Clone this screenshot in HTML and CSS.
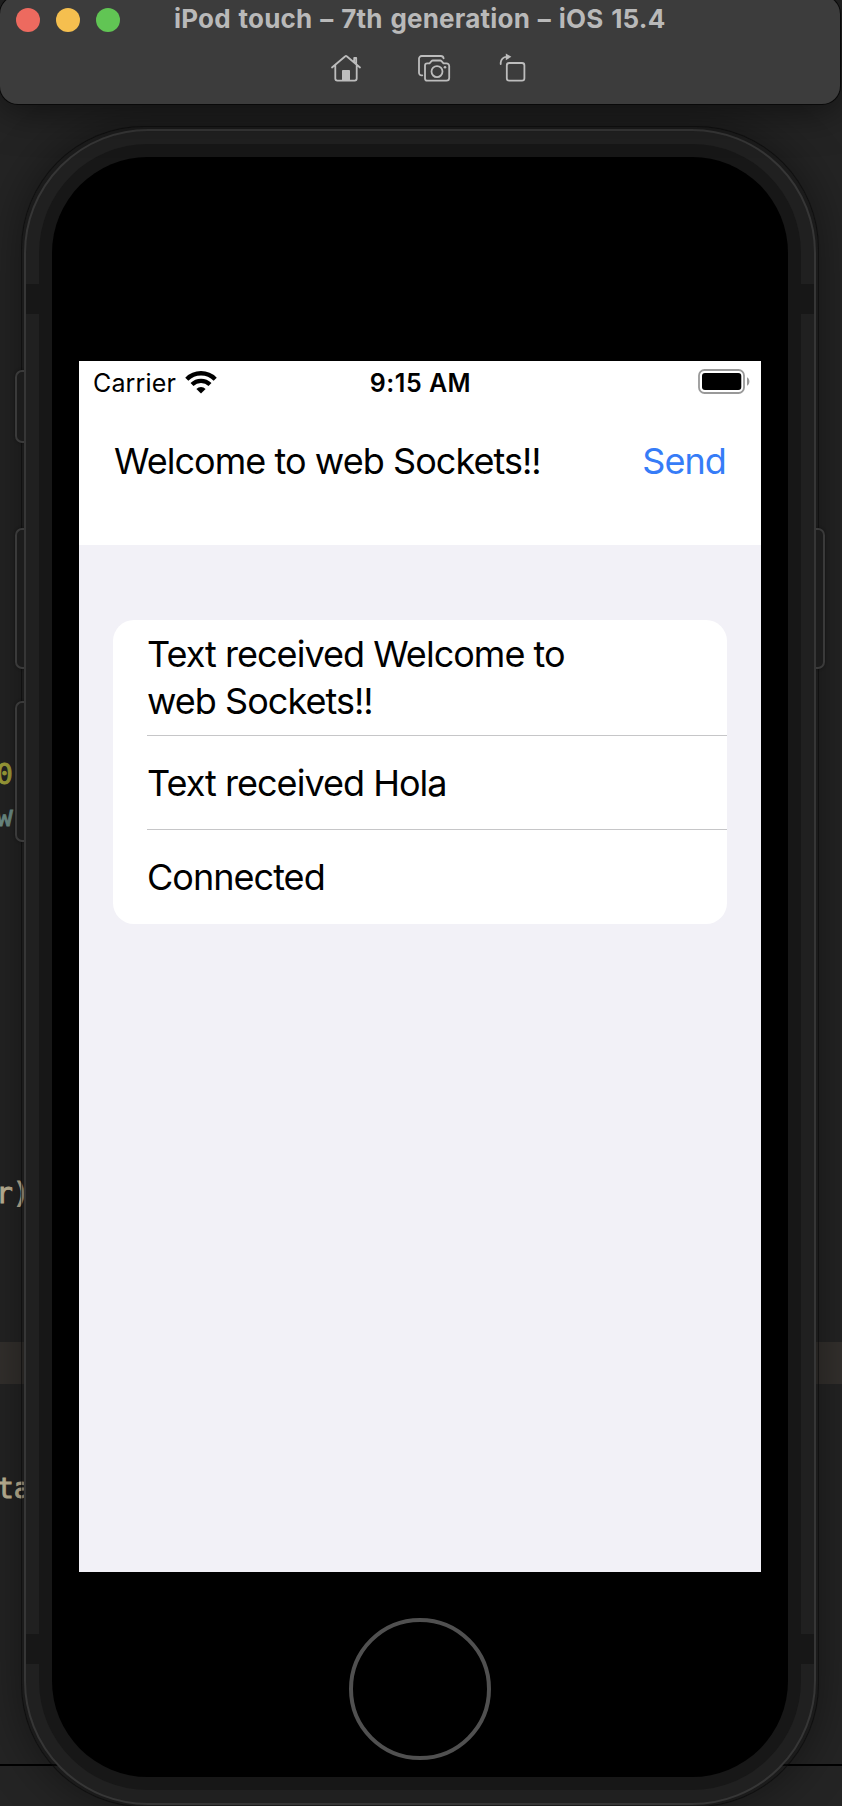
FILE: index.html
```html
<!DOCTYPE html>
<html lang="en">
<head>
<meta charset="utf-8">
<title>Simulator</title>
<link rel="stylesheet" href="styles.css">
</head>
<body>
<div class="desktop">
  <div class="code-band"></div>
  <div class="panel-divider"></div>
  <span class="code code-number">0</span>
  <span class="code code-type">w</span>
  <span class="code code-call">r)</span>
  <span class="code code-name">ta</span>

  <div class="phone-shadow"></div>
  <div class="side-button left mute"></div>
  <div class="side-button left volume-up"></div>
  <div class="side-button left volume-down"></div>
  <div class="side-button right power"></div>

  <main class="phone">
    <i class="antenna upper-left"></i><i class="antenna upper-right"></i>
    <i class="antenna lower-left"></i><i class="antenna lower-right"></i>
    <div class="bezel">
      <div class="face">
        <div class="screen">
          <div class="status-bar">
            <div class="carrier"><span class="carrier-name">Carrier</span>
              <svg class="wifi" width="32" height="24" viewBox="0 0 32 24" fill="none" stroke="#000">
                <path d="M1.8 9.2a20 20 0 0 1 28.4 0" stroke-width="4.4"/>
                <path d="M7 14.6a12.8 12.8 0 0 1 18 0" stroke-width="4.2"/>
                <path d="M16 23.6l-4.6-4.6a6.5 6.5 0 0 1 9.2 0z" fill="#000" stroke="none"/>
              </svg>
            </div>
            <div class="time">9:15 AM</div>
            <svg class="battery" width="52" height="25" viewBox="0 0 52 25">
              <rect x="1" y="1" width="45" height="23" rx="5.5" fill="none" stroke="#999" stroke-width="1.8"/>
              <rect x="4" y="4" width="39.3" height="17" rx="3" fill="#000"/>
              <path d="M49 8.2c3.2 1.4 3.2 7.2 0 8.6z" fill="#999"/>
            </svg>
          </div>
          <div class="composer">
            <span class="message">Welcome to web Sockets!!</span>
            <button class="send">Send</button>
          </div>
          <div class="log">
            <ul class="card">
              <li class="row first"><span class="row-text">Text received Welcome to<br>web Sockets!!</span></li>
              <li class="row"><span class="row-text">Text received Hola</span></li>
              <li class="row"><span class="row-text">Connected</span></li>
            </ul>
          </div>
        </div>
        <div class="home-button"></div>
      </div>
    </div>
  </main>

  <header class="toolbar">
    <div class="title-row">
      <div class="lights"><i class="light close"></i><i class="light minimize"></i><i class="light zoom"></i></div>
      <h1 class="title">iPod touch – 7th generation – iOS 15.4</h1>
    </div>
    <div class="tools">
      <svg width="32" height="30" viewBox="0 0 32 30" fill="none" stroke="#bdbdbd" stroke-width="1.8" stroke-linecap="round" stroke-linejoin="round">
        <path d="M2 14.5L15.3 3.2a1 1 0 0 1 1.4 0L30 14.5M5.3 12v13.6a2 2 0 0 0 2 2h17.4a2 2 0 0 0 2-2V12M24.2 9V5h2v6"/>
        <path d="M12.5 27V17.5h7V27z" fill="#bdbdbd" stroke-width="1"/>
      </svg>
      <svg class="camera" width="34" height="30" viewBox="0 0 34 30" fill="none" stroke="#bdbdbd" stroke-width="1.8" stroke-linecap="round" stroke-linejoin="round">
        <path d="M4.3 22.3H3.6a2.6 2.6 0 0 1-2.6-2.6V5.6A2.6 2.6 0 0 1 3.6 3h19.2a2.8 2.8 0 0 1 2.8 2.4"/>
        <path d="M9.2 10.3h2.3l2-2.2a2 2 0 0 1 1.3-.6h7.4a2 2 0 0 1 1.3.6l2 2.2h3a2.7 2.7 0 0 1 2.7 2.7v12a2.7 2.7 0 0 1-2.7 2.7H9.2a2.2 2.2 0 0 1-2.2-2.2V12.5a2.2 2.2 0 0 1 2.2-2.2z"/>
        <circle cx="19" cy="18.6" r="5.5"/><circle cx="27" cy="14.2" r="1.3" fill="#bdbdbd" stroke="none"/>
      </svg>
      <svg class="rotate" width="28" height="30" viewBox="0 0 28 30" fill="none" stroke="#bdbdbd" stroke-width="1.8" stroke-linecap="round">
        <rect x="7.8" y="10" width="17.6" height="17.6" rx="2.4"/>
        <path d="M1.7 11v-1.2a6 6 0 0 1 6-6H8.5"/>
        <path d="M6.8.4L12.4 3.8 6.8 7.2z" fill="#bdbdbd" stroke="none"/>
      </svg>
    </div>
  </header>
</div>
</body>
</html>
```
FILE: styles.css
```css
* { box-sizing: border-box; }

body {
  margin: 0;
  background: #242424;
  font-family: Inter, "Liberation Sans", sans-serif;
}

.desktop {
  position: relative;
  width: 842px;
  height: 1806px;
  overflow: hidden;
  background: #242424;
}

/* Editor showing behind the simulator */
.code-band {
  position: absolute;
  top: 1342px;
  left: 0;
  width: 100%;
  height: 42px;
  background: #34312e;
}

.panel-divider {
  position: absolute;
  top: 1764px;
  left: 0;
  width: 100%;
  height: 2px;
  background: #000;
}

.code {
  position: absolute;
  left: -3px;
  font: 28px/34px "DejaVu Sans Mono", monospace;
  -webkit-text-stroke: .9px currentColor;
  white-space: pre;
}

.code-number { top: 758px; left: -4px; color: #a3a33b; }
.code-type { top: 800px; left: -4px; color: #71918a; }
.code-call { top: 1177px; left: -4px; color: #c4b899; }
.code-name { top: 1472px; color: #c4b899; }

/* Device */
.phone-shadow {
  position: absolute;
  top: 127px;
  left: 22px;
  width: 796px;
  height: 1679px;
  border-radius: 122px;
  background: rgba(16, 16, 16, .4);
  box-shadow: 0 0 0 1px rgba(8, 8, 8, .6), 0 0 50px rgba(0, 0, 0, .45);
}

.side-button {
  position: absolute;
  width: 10px;
  border: 2px solid #3a3a3a;
  background: #1c1c1c;
  box-shadow: 0 0 3px rgba(0, 0, 0, .4);
}

.left { left: 14.5px; border-right: 0; border-radius: 7px 0 0 7px; }
.right { left: 815px; border-left: 0; border-radius: 0 7px 7px 0; }
.mute { top: 370px; height: 73px; }
.volume-up, .power { top: 528px; height: 141px; }
.volume-down { top: 701px; height: 141px; }

.phone {
  position: absolute;
  top: 129px;
  left: 24px;
  width: 792px;
  height: 1676px;
  padding: 13px;
  border: 2px solid #363636;
  border-radius: 124px;
  background: #202020;
}

.antenna {
  position: absolute;
  width: 13px;
  height: 30px;
  background: #171717;
}

.upper-left, .upper-right { top: 153px; }
.lower-left, .lower-right { top: 1503px; }
.upper-left, .lower-left { left: 0; }
.upper-right, .lower-right { right: 0; }

.bezel {
  height: 100%;
  padding: 13px;
  border-radius: 109px;
  background: #171717;
}

.face {
  display: flex;
  flex-direction: column;
  align-items: center;
  height: 100%;
  padding-top: 204px;
  border-radius: 96px;
  background: #000;
}

.screen {
  display: flex;
  flex-direction: column;
  width: 682px;
  height: 1211px;
  background: #fff;
  color: #000;
}

.status-bar {
  display: grid;
  grid-template-columns: 1fr auto 1fr;
  align-items: center;
  height: 43px;
  padding: 0 12px 0 13px;
  font-size: 25px;
  line-height: 43px;
}

.carrier { display: flex; align-items: center; gap: 9px; padding-left: 1px; }
.carrier-name { padding-top: 1px; letter-spacing: .15px; }
.wifi { margin-top: -2px; }
.time { padding-top: 1px; font-weight: 600; letter-spacing: .5px; }
.battery { justify-self: end; margin: -3px -1px 0 0; }

.composer {
  display: flex;
  justify-content: space-between;
  height: 141px;
  padding: 34px 35px 0 35px;
  font-size: 36px;
  line-height: 47px;
}

.message { letter-spacing: -.95px; }

.send {
  align-self: flex-start;
  padding: 0;
  border: 0;
  background: none;
  color: #367cf7;
  font: inherit;
  letter-spacing: -.9px;
}

.log {
  flex: 1;
  padding: 75px 34px 0;
  background: #f2f1f7;
}

.card {
  margin: 0;
  padding: 0 0 0 34px;
  border-radius: 21px;
  background: #fff;
  list-style: none;
}

.row {
  display: flex;
  align-items: center;
  height: 94px;
  padding-top: 1px;
  font-size: 36px;
  line-height: 47px;
  letter-spacing: -.97px;
}

.row.first { height: 115px; }
.row:last-child { height: 95px; }
.row + .row { border-top: 1px solid #c6c6c8; }

.home-button {
  width: 142px;
  height: 142px;
  margin-top: 46px;
  border: 4px solid #505050;
  border-radius: 50%;
}

/* Simulator window bar */
.toolbar {
  position: absolute;
  top: -4px;
  left: 0;
  width: 840px;
  height: 108px;
  padding-top: 4px;
  border-radius: 18px;
  background: #3c3c3c;
  box-shadow: 0 0 0 1px #090909, 0 5px 40px rgba(0, 0, 0, .55);
}

.title-row { display: flex; height: 40px; padding-left: 16px; }
.lights { display: flex; align-items: center; gap: 16px; }
.light { width: 24px; height: 24px; border-radius: 50%; }
.close { background: #ed6a5f; }
.minimize { background: #f5bf4f; }
.zoom { background: #61c554; }

.title {
  margin: 0 0 0 54px;
  color: #b9b9b9;
  font-size: 26px;
  font-weight: 700;
  line-height: 38px;
  letter-spacing: .2px;
  word-spacing: 1.4px;
  white-space: nowrap;
}

.tools {
  display: flex;
  margin: 13px 0 0 330px;
}

.camera { margin-left: 56px; }
.rotate { margin-left: 47px; }
```
